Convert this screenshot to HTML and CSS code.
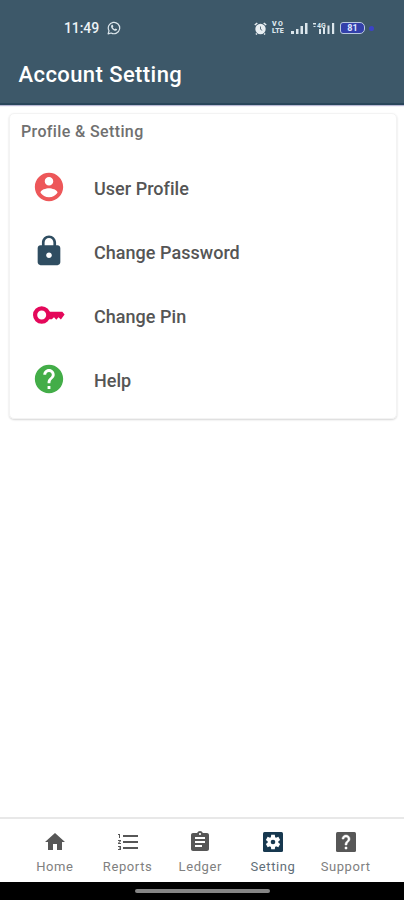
FILE: index.html
```html
<!DOCTYPE html>
<html lang="en">
<head>
<meta charset="utf-8">
<title>Account Setting</title>
<link rel="stylesheet" href="styles.css">
</head>
<body>
<div class="screen">
  <header class="header">
    <div class="status">
      <span class="time">11:49</span>
      <svg class="whatsapp" viewBox="0 0 14 14"><path d="M1.1 12.9 2 9.8A5.7 5.7 0 1 1 4.2 12z" fill="none" stroke="#dce6ec" stroke-width="1.2" stroke-linejoin="round"/><path d="M4.6 3.9c-1.3 1.2-.2 3.3 1.1 4.5 1.4 1.3 3.3 2 4.2.7.4-.6.2-.9-.3-1.1l-1-.5-.8.8C6.8 7.800 6.200 7.200 5.700 6.200l.7-.8-.6-1.400c-.3-.5-.8-.4-1.200-.1z" fill="#dce6ec"/></svg>
      <div class="indicators">
        <svg class="alarm" viewBox="0 0 13 13"><circle cx="6.500" cy="7" r="5.200" fill="#e8eef2"/><path d="M.8 3 3.300 1M12.200 3 9.700 1M2.800 11.500 2 12.500M10.200 11.500l.8 1" stroke="#e8eef2" stroke-width="1.600"/><path d="M6.500 4.500v2.800l1.700 1" fill="none" stroke="#5c7280" stroke-width="1"/></svg>
        <span class="volte"><span class="vo">VO</span><span>LTE</span></span>
        <svg class="signal" viewBox="0 0 17 12"><path d="M0 9h3v3H0zM5 7h2.500v5H5zM9.500 4H12v8H9.500zM14 1h2.500v11H14z" fill="#dce6ec"/></svg>
        <svg class="signal-4g" viewBox="0 0 24 14"><path d="M1 2h3v1.500H1zM1.500 5h2v1h-2zM11 7h2v6h-2zM15.500 4.500h2V13h-2zM20 2h2.200v11H20zM7 8h2v5H7z" fill="#dce6ec"/><text x="5" y="6.500" font-size="7" font-weight="700" fill="#dce6ec">4G</text></svg>
        <span class="battery">81</span>
        <span class="dot"></span>
      </div>
    </div>
    <h1>Account Setting</h1>
  </header>
  <main class="content">
    <section class="card">
      <h2>Profile &amp; Setting</h2>
      <a class="row"><svg viewBox="0 0 24 24" fill="#ed5759"><path d="M12 2C6.480 2 2 6.480 2 12s4.480 10 10 10 10-4.480 10-10S17.520 2 12 2zm0 3c1.660 0 3 1.340 3 3s-1.340 3-3 3-3-1.340-3-3 1.340-3 3-3zm0 14.200c-2.500 0-4.710-1.280-6-3.220.03-1.990 4-3.080 6-3.080 1.990 0 5.970 1.090 6 3.080-1.290 1.940-3.500 3.220-6 3.220z"/></svg><span>User Profile</span></a>
      <a class="row"><svg viewBox="0 0 24 24" fill="#2f4d61"><path d="M18 8h-1V6c0-2.760-2.240-5-5-5S7 3.240 7 6v2H6c-1.100 0-2 .9-2 2v10c0 1.100.9 2 2 2h12c1.100 0 2-.9 2-2V10c0-1.100-.9-2-2-2zm-6 9c-1.100 0-2-.9-2-2s.9-2 2-2 2 .9 2 2-.9 2-2 2zm3.100-9H8.900V6c0-1.710 1.390-3.100 3.100-3.100s3.100 1.390 3.100 3.100v2z"/></svg><span>Change Password</span></a>
      <a class="row"><svg viewBox="0 0 34 34"><circle cx="9.700" cy="17" r="6.600" fill="none" stroke="#e4085a" stroke-width="4.200"/><path d="M16 13.800h14.300l2.300 2.600-3.700 5.100-2.400-2.200-2.200 2.400-2.300-2.400-2.200 2H16z" fill="#e4085a"/></svg><span>Change Pin</span></a>
      <a class="row"><svg viewBox="0 0 24 24" fill="#43ad48"><path d="M12 2C6.480 2 2 6.480 2 12s4.480 10 10 10 10-4.480 10-10S17.520 2 12 2zm1 17h-2v-2h2v2zm2.070-7.750l-.9.920C13.450 12.900 13 13.500 13 15h-2v-.5c0-1.100.45-2.100 1.170-2.830l1.240-1.260c.37-.36.59-.86.59-1.410 0-1.100-.9-2-2-2s-2 .9-2 2H8c0-2.210 1.790-4 4-4s4 1.790 4 4c0 .88-.36 1.680-.93 2.250z"/></svg><span>Help</span></a>
    </section>
  </main>
  <nav class="nav">
    <a><svg viewBox="0 0 24 24"><path d="M10 20v-6h4v6h5v-8h3L12 3 2 12h3v8z"/></svg><span>Home</span></a>
    <a><svg viewBox="0 0 24 24"><path d="M2 17h2v.5H3v1h1v.5H2v1h3v-4H2v1zm1-9h1V4H2v1h1v3zm-1 3h1.800L2 13.100v.9h3v-1H3.200L5 10.900V10H2v1zm5-6v2h15V5H7zm0 14h15v-2H7v2zm0-6h15v-2H7v2z"/></svg><span>Reports</span></a>
    <a><svg viewBox="0 0 24 24"><path d="M19 3h-4.180C14.400 1.840 13.300 1 12 1c-1.300 0-2.400.84-2.820 2H5c-1.100 0-2 .9-2 2v14c0 1.100.9 2 2 2h14c1.100 0 2-.9 2-2V5c0-1.100-.9-2-2-2zm-7 0c.55 0 1 .45 1 1s-.45 1-1 1-1-.45-1-1 .45-1 1-1zm2 14H7v-2h7v2zm3-4H7v-2h10v2zm0-4H7V7h10v2z"/></svg><span>Ledger</span></a>
    <a class="active"><svg viewBox="0 0 24 24"><rect x="2" y="2" width="20" height="20" rx="1.500"/><g fill="#fff"><circle cx="12" cy="12" r="5.300"/><path d="M10.200 4.800h3.600l.5 3.700H9.700zM10.200 19.200h3.600l.5-3.700H9.700z"/><path d="M10.200 4.800h3.600l.5 3.700H9.700zM10.200 19.200h3.600l.5-3.700H9.700z" transform="rotate(60 12 12)"/><path d="M10.200 4.800h3.600l.5 3.700H9.700zM10.200 19.200h3.600l.5-3.700H9.700z" transform="rotate(120 12 12)"/></g><circle cx="12" cy="12" r="2.300"/></svg><span>Setting</span></a>
    <a><svg viewBox="0 0 24 24"><rect x="2" y="2" width="20" height="20" rx="1.500"/><path fill="#fff" stroke="#fff" stroke-width=".5" d="M13 19h-2v-2h2v2zm2.070-7.750l-.9.920C13.450 12.900 13 13.500 13 15h-2v-.5c0-1.100.45-2.100 1.170-2.830l1.240-1.260c.37-.36.59-.86.59-1.410 0-1.100-.9-2-2-2s-2 .9-2 2H8c0-2.210 1.790-4 4-4s4 1.790 4 4c0 .88-.36 1.680-.93 2.250z"/></svg><span>Support</span></a>
  </nav>
  <footer class="gesture"><span></span></footer>
</div>
</body>
</html>
```
FILE: styles.css
```css
* { box-sizing: border-box; }
body { margin: 0; font-family: Roboto, "Liberation Sans", sans-serif; background: #fff; }
svg { display: block; flex: none; }
.screen { width: 404px; height: 900px; display: flex; flex-direction: column; overflow: hidden; }
.header { height: 105px; flex: none; background: #3d5869; border-bottom: 2px solid #29465a; box-shadow: 0 1px 1px #b9b9d4; color: #fff; }
.status { height: 56px; padding: 0 30px 0 64px; display: flex; align-items: center; }
.time { font-size: 14px; font-weight: 500; letter-spacing: -0.1px; color: #edf3f6; }
.whatsapp { width: 14px; height: 14px; margin-left: 8px; }
.indicators { margin-left: auto; display: flex; align-items: center; }
.alarm { width: 13px; height: 13px; margin-right: 5px; }
.volte { width: 14px; display: flex; flex-direction: column; font-size: 7px; line-height: 7px; font-weight: 900; letter-spacing: 0.1px; color: #dce6ec; margin-right: 5px; }
.vo { letter-spacing: 1.5px; }
.signal { width: 17px; height: 12px; margin-right: 4px; }
.signal-4g { width: 24px; height: 14px; margin-right: 4px; }
.battery { width: 25px; height: 12px; border: 1.5px solid #b9c8df; border-radius: 3px 5px 5px 3px; background: #3340aa; color: #dfe5ff; font-size: 9px; font-weight: 700; line-height: 10px; text-align: center; }
.dot { width: 5px; height: 5px; border-radius: 50%; background: #3c43c8; margin-left: 4px; }
h1 { margin: 6px 0 0 18.5px; font-size: 22px; line-height: 26px; font-weight: 500; letter-spacing: 0.42px; }
.content { flex: 1; padding: 8px 7px 0 9px; }
.card { height: 306px; border: 1px solid #f3f3f3; border-radius: 5px; box-shadow: 0 1px 2px #d5d5d5; }
h2 { margin: 8px 0 15px 11px; font-size: 16px; line-height: 20px; font-weight: 500; letter-spacing: 0.37px; color: #707070; }
.row { height: 63.8px; padding-left: 22px; display: flex; align-items: center; gap: 28px; }
.row svg { width: 34px; height: 34px; margin-top: -3px; }
.row span { font-size: 18px; line-height: 22px; font-weight: 500; color: #555; padding-top: 1px; letter-spacing: 0.03px; }
.nav { height: 65px; flex: none; border-top: 2px solid #e8e8e8; padding: 11px 22px 0 18.5px; display: flex; background: #fff; }
.nav a { flex: 1; display: flex; flex-direction: column; align-items: center; color: #808080; fill: #575757; }
.nav svg { width: 24px; height: 24px; }
.nav span { font-size: 13px; line-height: 16px; margin-top: 5px; letter-spacing: 0.6px; }
.nav .active { color: #5f6e78; fill: #17384f; }
.gesture { height: 18px; flex: none; background: #000; display: flex; justify-content: center; padding-top: 7px; }
.gesture span { width: 135px; height: 4px; border-radius: 2px; background: #858585; }
```
